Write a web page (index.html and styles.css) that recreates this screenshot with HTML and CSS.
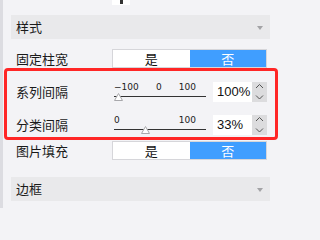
FILE: index.html
```html
<!DOCTYPE html>
<html lang="zh-CN">
<head>
<meta charset="utf-8">
<title>样式</title>
<link rel="stylesheet" href="styles.css">
</head>
<body>
<div class="panel">
  <div class="stub"><span class="stub-box"><span class="stub-mark"></span></span></div>

  <div class="section-head"><span class="section-title">样式</span><span class="caret"></span></div>

  <div class="row row-a">
    <span class="label">固定柱宽</span>
    <div class="toggle"><span class="opt">是</span><span class="opt on">否</span></div>
  </div>

  <div class="row row-b">
    <span class="label">系列间隔</span>
    <div class="slider">
      <div class="ticks"><span>−100</span><span>0</span><span>100</span></div>
      <div class="track"><svg class="thumb" style="--v:0" viewBox="0 0 9 8" width="9" height="8"><polygon points="4.5,0.5 8.5,7.5 0.5,7.5"/></svg></div>
    </div>
    <div class="spin">
      <span class="spin-value">100%</span>
      <svg class="spin-btns" viewBox="0 0 15 20" width="15" height="20"><polyline points="4,6 7.5,2.5 11,6"/><polyline points="4,13.5 7.5,17 11,13.5"/></svg>
    </div>
  </div>

  <div class="row row-c">
    <span class="label">分类间隔</span>
    <div class="slider">
      <div class="ticks"><span>0</span><span>100</span></div>
      <div class="track"><svg class="thumb" style="--v:0.33" viewBox="0 0 9 8" width="9" height="8"><polygon points="4.5,0.5 8.5,7.5 0.5,7.5"/></svg></div>
    </div>
    <div class="spin">
      <span class="spin-value">33%</span>
      <svg class="spin-btns" viewBox="0 0 15 20" width="15" height="20"><polyline points="4,6 7.5,2.5 11,6"/><polyline points="4,13.5 7.5,17 11,13.5"/></svg>
    </div>
  </div>

  <div class="row row-d">
    <span class="label">图片填充</span>
    <div class="toggle"><span class="opt">是</span><span class="opt on">否</span></div>
  </div>

  <div class="section-head section-head-2"><span class="section-title">边框</span><span class="caret"></span></div>
</div>
<div class="highlight"></div>
</body>
</html>
```

FILE: styles.css
```css
html, body {
  margin: 0;
  padding: 0;
  background: #f3f3f6;
}
body {
  width: 282px;
  height: 208px;
  overflow: hidden;
  font-family: "Noto Sans CJK SC", "Liberation Sans", sans-serif;
  color: #1a1a1a;
  position: relative;
}
.panel {
  border-left: 3px solid #dcdce1;
  height: 208px;
  box-sizing: border-box;
  padding-left: 8px;
  width: 270px;
}
.stub {
  height: 6px;
  display: flex;
}
.stub-box {
  margin-left: 101px;
  width: 18px;
  height: 5px;
  background: #fff;
  display: flex;
  justify-content: center;
}
.stub-mark {
  width: 3px;
  height: 4px;
  background: #333;
}
.section-head {
  margin-top: 9px;
  height: 24px;
  background: #e9e9eb;
  display: flex;
  align-items: center;
  justify-content: space-between;
  padding: 0 7px 0 5px;
  font-size: 13px;
  line-height: 24px;
}
.section-head-2 {
  margin-top: 17px;
}
.caret {
  width: 0;
  height: 0;
  border-left: 3.5px solid transparent;
  border-right: 3.5px solid transparent;
  border-top: 4px solid #a3a3a6;
  margin-top: 1px;
}
.row {
  display: flex;
  align-items: center;
}
.label {
  width: 96px;
  padding-left: 5px;
  font-size: 13px;
  line-height: 16px;
  flex: none;
}
.row-a {
  margin-top: 10px;
  height: 19px;
}
.row-b {
  margin-top: 14px;
  height: 20px;
}
.row-c {
  margin-top: 13px;
  height: 20px;
}
.row-d {
  margin-top: 6px;
  height: 19px;
}
.toggle {
  display: flex;
  width: 155px;
  height: 19px;
  box-sizing: border-box;
  border: 1px solid #d6d6da;
  background: #fff;
}
.opt {
  flex: 1;
  text-align: center;
  font-size: 13px;
  line-height: 17px;
  color: #111;
}
.opt.on {
  background: #409eff;
  color: #fff;
}
.slider {
  margin-left: 2px;
  width: 92px;
  height: 20px;
  flex: none;
}
.ticks {
  height: 14px;
  display: flex;
  justify-content: space-between;
  padding-right: 10px;
  font-family: "DejaVu Sans", sans-serif;
  font-size: 9px;
  line-height: 10px;
  color: #222;
}
.track {
  position: relative;
  height: 1px;
  background: #333;
}
.thumb {
  position: absolute;
  top: -3px;
  left: calc((100% - 9px) * var(--v));
  display: block;
}
.thumb polygon {
  fill: #fff;
  stroke: #a8a8ac;
  stroke-width: 1;
}
.spin {
  margin-left: 7px;
  display: flex;
  height: 20px;
}
.spin-value {
  width: 39px;
  box-sizing: border-box;
  padding-left: 4px;
  background: #fff;
  font-family: "Liberation Sans", sans-serif;
  font-size: 13px;
  line-height: 20px;
  color: #111;
}
.spin-btns {
  display: block;
  background: #dcdcde;
}
.spin-btns polyline {
  fill: none;
  stroke: #555;
  stroke-width: 1;
}
.highlight {
  position: absolute;
  left: 4px;
  top: 68px;
  width: 274px;
  height: 72px;
  box-sizing: border-box;
  border: 3px solid #ff2626;
  border-radius: 4px;
  pointer-events: none;
}
```
